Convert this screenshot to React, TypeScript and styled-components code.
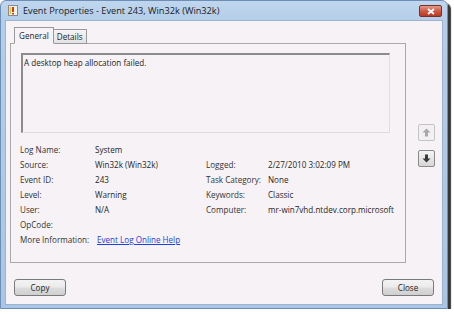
import * as React from 'react';
import styled, { createGlobalStyle } from 'styled-components';

const GlobalStyle = createGlobalStyle`
    html, body {
        margin: 0;
        padding: 0;
        background: #ffffff;
    }
    body {
        font-family: 'Open Sans', 'Noto Sans', Arial, sans-serif;
        font-size: 8.1px;
        color: #2b2b2b;
    }
`;

const details = [
    { label: 'Log Name:', value: 'System' },
    { label: 'Source:', value: 'Win32k (Win32k)', label2: 'Logged:', value2: '2/27/2010 3:02:09 PM' },
    { label: 'Event ID:', value: '243', label2: 'Task Category:', value2: 'None' },
    { label: 'Level:', value: 'Warning', label2: 'Keywords:', value2: 'Classic' },
    { label: 'User:', value: 'N/A', label2: 'Computer:', value2: 'mr-win7vhd.ntdev.corp.microsoft' },
    { label: 'OpCode:', value: '' },
];

const ArrowIcon = ({ down, disabled }: { down?: boolean; disabled?: boolean }) => (
    <svg width="9" height="9" viewBox="0 0 9 9" style={{ transform: down ? 'rotate(180deg)' : undefined }}>
        <path d="M4.5 0.5 L8.5 4.5 L6 4.5 L6 8.5 L3 8.5 L3 4.5 L0.5 4.5 Z" fill={disabled ? '#a8a8a8' : '#3a3a3a'} />
    </svg>
);

const EventIcon = () => (
    <svg width="10" height="11" viewBox="0 0 10 11">
        <rect x="0.5" y="0.5" width="9" height="10" fill="#f4f1e6" stroke="#8a8a8a" />
        <rect x="4" y="2" width="2" height="5" fill="#d23a1e" />
        <rect x="4" y="8" width="2" height="1.5" fill="#d23a1e" />
        <rect x="1.5" y="2" width="1.5" height="7" fill="#f1c232" />
    </svg>
);

const App = () => {
    return (
        <>
            <GlobalStyle />
            <Window>
                <TitleBar>
                    <EventIcon />
                    <Title>Event Properties - Event 243, Win32k (Win32k)</Title>
                    <CloseBox>
                        <svg width="8" height="7" viewBox="0 0 8 7">
                            <path d="M1 1 L7 6 M7 1 L1 6" stroke="#ffffff" strokeWidth="1.8" />
                        </svg>
                    </CloseBox>
                </TitleBar>
                <Client>
                    <MainRow>
                        <TabsArea>
                            <TabStrip>
                                <Tab active>General</Tab>
                                <Tab>Details</Tab>
                            </TabStrip>
                            <TabPanel>
                                <Description>A desktop heap allocation failed.</Description>
                                <DetailGrid>
                                    {details.map((d) => (
                                        <React.Fragment key={d.label}>
                                            <Label>{d.label}</Label>
                                            <Value>{d.value}</Value>
                                            <Label>{d.label2 || ''}</Label>
                                            <Value>{d.value2 || ''}</Value>
                                        </React.Fragment>
                                    ))}
                                    <Label>More Information:</Label>
                                    <Value>
                                        <Link>Event Log Online Help</Link>
                                    </Value>
                                </DetailGrid>
                            </TabPanel>
                        </TabsArea>
                        <SideButtons>
                            <ArrowButton disabled>
                                <ArrowIcon disabled />
                            </ArrowButton>
                            <ArrowButton>
                                <ArrowIcon down />
                            </ArrowButton>
                        </SideButtons>
                    </MainRow>
                    <Footer>
                        <PushButton>Copy</PushButton>
                        <PushButton>Close</PushButton>
                    </Footer>
                </Client>
            </Window>
        </>
    );
};

const Window = styled.div`
    width: 448px;
    height: 309px;
    box-sizing: border-box;
    display: flex;
    flex-direction: column;
    background: linear-gradient(180deg, #bfd6ee 0px, #b4cde9 20px, #aac6e6 100%);
    border: 1px solid #6d8fb5;
    border-radius: 6px 6px 0 0;
    box-shadow: 3px 3px 1px rgba(20, 20, 20, 0.85);
`;

const TitleBar = styled.div`
    height: 19px;
    display: flex;
    align-items: center;
    padding: 0 5px 0 7px;
    gap: 5px;
`;

const Title = styled.div`
    flex: 1;
    font-size: 9.2px;
    color: #1b1b1b;
    white-space: nowrap;
`;

const CloseBox = styled.div`
    width: 21px;
    height: 10px;
    margin-top: 1px;
    display: flex;
    align-items: center;
    justify-content: center;
    border: 1px solid #7a3026;
    border-radius: 2px;
    background: linear-gradient(180deg, #e39a8c 0%, #cf5a44 50%, #b83a24 100%);
`;

const Client = styled.div`
    flex: 1;
    margin: 0 4px 3px 4px;
    background: #f6f2f6;
    border: 1px solid #9db4cf;
    display: flex;
    flex-direction: column;
`;

const MainRow = styled.div`
    display: flex;
    padding: 5px 0 0 4px;
`;

const TabsArea = styled.div`
    width: 396px;
    display: flex;
    flex-direction: column;
`;

const TabStrip = styled.div`
    display: flex;
    align-items: flex-end;
    height: 17px;
    padding-left: 4px;
`;

const Tab = styled.div<{ active?: boolean }>`
    height: ${(p) => (p.active ? '17px' : '15px')};
    box-sizing: border-box;
    padding: 0 ${(p) => (p.active ? '4px' : '3px')};
    display: flex;
    align-items: center;
    border: 1px solid #9a9a9a;
    border-bottom: ${(p) => (p.active ? '1px solid #f6f2f6' : '1px solid #9a9a9a')};
    border-left: ${(p) => (p.active ? '1px solid #9a9a9a' : 'none')};
    background: ${(p) => (p.active ? '#f6f2f6' : 'linear-gradient(180deg, #f4f4f4 0%, #e3e3e3 100%)')};
    margin-bottom: -1px;
    position: relative;
    z-index: ${(p) => (p.active ? 1 : 0)};
    color: #1e1e1e;
`;

const TabPanel = styled.div`
    height: 220px;
    box-sizing: border-box;
    border: 1px solid #a9a9a9;
    padding: 9px 0 0 10px;
`;

const Description = styled.div`
    width: 369px;
    height: 80px;
    box-sizing: border-box;
    border-top: 2px solid #8c8c8c;
    border-left: 2px solid #8c8c8c;
    border-right: 1px solid #e0dde0;
    border-bottom: 1px solid #e0dde0;
    padding: 2px 1px;
    color: #1e1e1e;
`;

const DetailGrid = styled.div`
    display: grid;
    grid-template-columns: 75px 111px 62px 1fr;
    grid-auto-rows: 15px;
    align-items: center;
    margin-top: 9px;
    margin-left: -1px;
`;

const Label = styled.div`
    color: #333333;
    white-space: nowrap;
`;

const Value = styled.div`
    color: #262626;
    white-space: nowrap;
`;

const Link = styled.span`
    margin-left: 2px;
    color: #1f3fe0;
    text-decoration: underline;
`;

const SideButtons = styled.div`
    display: flex;
    flex-direction: column;
    gap: 9px;
    padding-top: 98px;
    margin-left: 12px;
`;

const ArrowButton = styled.div<{ disabled?: boolean }>`
    width: 17px;
    height: 17px;
    box-sizing: border-box;
    display: flex;
    align-items: center;
    justify-content: center;
    border: 1px solid ${(p) => (p.disabled ? '#c4c4c4' : '#8a8a8a')};
    border-radius: 2px;
    background: ${(p) => (p.disabled ? '#f2f0f2' : 'linear-gradient(180deg, #f4f4f4 0%, #e6e6e6 50%, #d6d6d6 100%)')};
`;

const Footer = styled.div`
    display: flex;
    justify-content: space-between;
    margin-top: 16px;
    padding: 0 8px;
`;

const PushButton = styled.div`
    width: 52px;
    height: 17px;
    box-sizing: border-box;
    display: flex;
    align-items: center;
    justify-content: center;
    border: 1px solid #7a7a7a;
    border-radius: 3px;
    background: linear-gradient(180deg, #f3f3f3 0%, #ebebeb 48%, #dddddd 52%, #cfcfcf 100%);
    color: #1e1e1e;
`;

export default App;
